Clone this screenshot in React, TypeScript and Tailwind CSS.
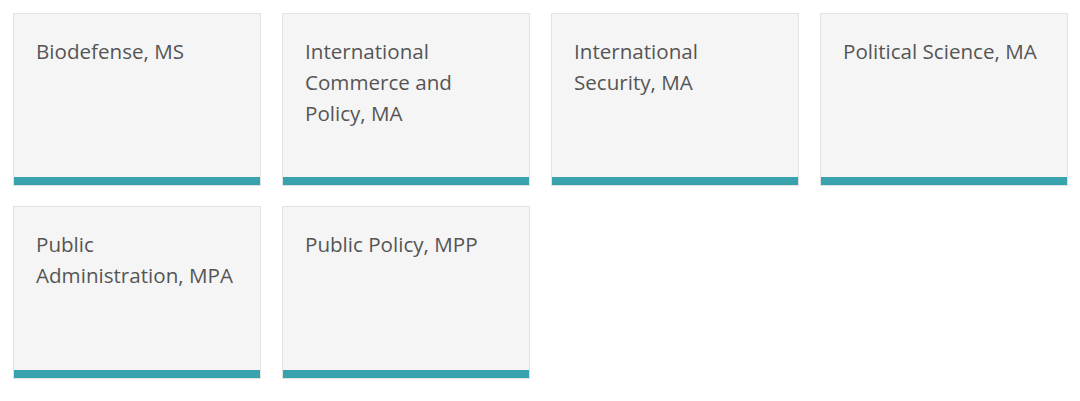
import React from "react";

const items = [
  "Biodefense, MS",
  "International Commerce and Policy, MA",
  "International Security, MA",
  "Political Science, MA",
  "Public Administration, MPA",
  "Public Policy, MPP",
];

export default function App() {
  return (
    <div className="w-[1080px] h-[401px] bg-white pt-[13px] pl-[13px]" style={{ fontFamily: '"Open Sans", sans-serif' }}>
      <div className="grid grid-cols-[repeat(4,248px)] gap-x-[21px] gap-y-[20px]">
        {items.map((t) => (
          <div key={t} className="h-[173px] border border-[#e2e2e2] bg-[#f5f5f5] flex flex-col">
            <div className="flex-1 pl-[22px] pr-[18px] pt-[22px] text-[20.6px] leading-[31px] text-[#555555]">{t}</div>
            <div className="h-[8px] bg-[#38a3ad]" />
          </div>
        ))}
      </div>
    </div>
  );
}
